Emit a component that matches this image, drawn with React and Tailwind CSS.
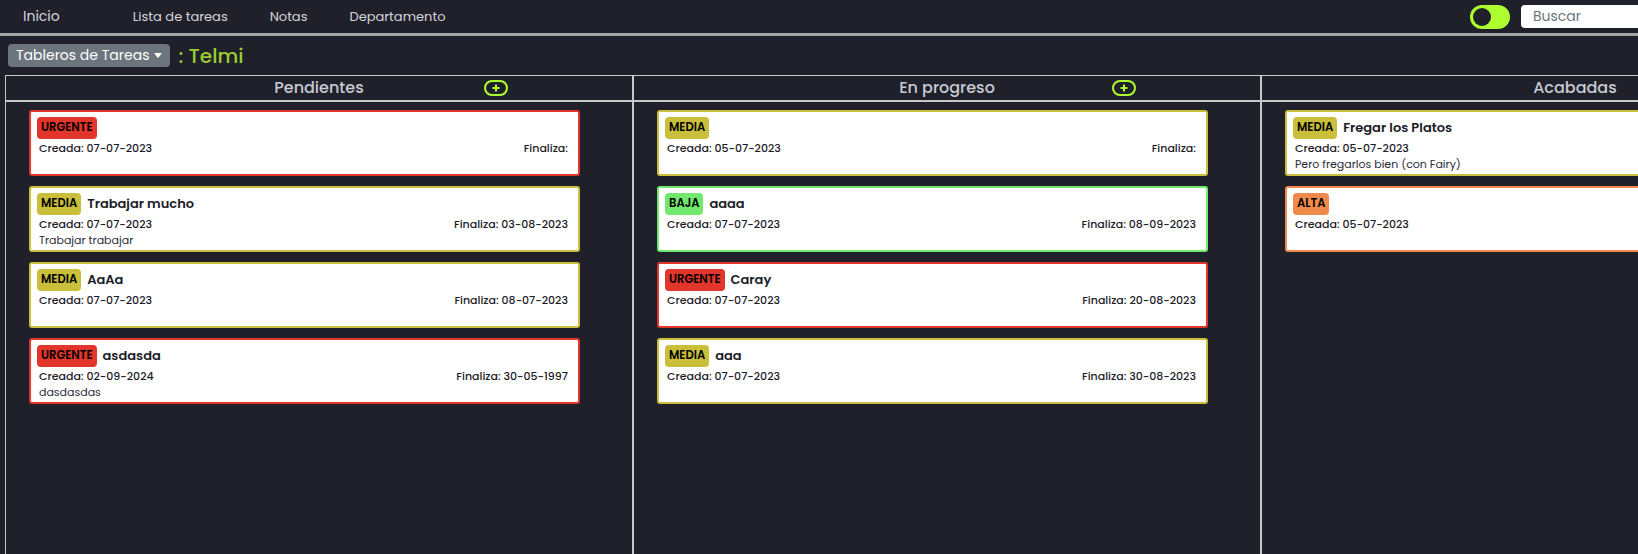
import { useState } from 'react'

const PRIORITY = {
  URGENTE: { badge: 'bg-[#e2352b]', border: 'border-[#e2352b]' },
  ALTA: { badge: 'bg-[#f08a4b]', border: 'border-[#f08a4b]' },
  MEDIA: { badge: 'bg-[#c9bf3a]', border: 'border-[#c9bf3a]' },
  BAJA: { badge: 'bg-[#72e86e]', border: 'border-[#72e86e]' },
}

const COLUMNS = [
  {
    name: 'Pendientes',
    tasks: [
      { p: 'URGENTE', title: '', created: '07-07-2023', ends: '', desc: '' },
      { p: 'MEDIA', title: 'Trabajar mucho', created: '07-07-2023', ends: '03-08-2023', desc: 'Trabajar trabajar' },
      { p: 'MEDIA', title: 'AaAa', created: '07-07-2023', ends: '08-07-2023', desc: '' },
      { p: 'URGENTE', title: 'asdasda', created: '02-09-2024', ends: '30-05-1997', desc: 'dasdasdas' },
    ],
  },
  {
    name: 'En progreso',
    tasks: [
      { p: 'MEDIA', title: '', created: '05-07-2023', ends: '', desc: '' },
      { p: 'BAJA', title: 'aaaa', created: '07-07-2023', ends: '08-09-2023', desc: '' },
      { p: 'URGENTE', title: 'Caray', created: '07-07-2023', ends: '20-08-2023', desc: '' },
      { p: 'MEDIA', title: 'aaa', created: '07-07-2023', ends: '30-08-2023', desc: '' },
    ],
  },
  {
    name: 'Acabadas',
    done: true,
    tasks: [
      { p: 'MEDIA', title: 'Fregar los Platos', created: '05-07-2023', desc: 'Pero fregarlos bien (con Fairy)' },
      { p: 'ALTA', title: '', created: '05-07-2023', desc: '' },
    ],
  },
]

function TaskCard({ task, done }) {
  const info = PRIORITY[task.p]
  return (
    <div className={`ml-[23px] mb-[10px] w-[551px] h-[66px] bg-white border-2 rounded-[3px] pt-[5px] pl-[6px] pr-[10px] ${info.border}`}>
      <div className="flex items-center h-[22px]">
        <span className={`h-[22px] px-[4px] rounded-[4px] flex items-center text-[11.5px] font-semibold text-black ${info.badge}`}>
          {task.p}
        </span>
        {task.title && (
          <span className="ml-[6px] text-[13px] font-semibold text-[#1c1c28]">{task.title}</span>
        )}
      </div>
      <div className="mt-[1px] flex justify-between pl-[2px] h-[16px] items-center text-[11px] font-medium text-[#1c1c28]">
        <span>Creada: {task.created}</span>
        {!done && <span>Finaliza: {task.ends}</span>}
      </div>
      {task.desc && (
        <p className="pl-[2px] h-[16px] flex items-center text-[11px] text-[#2a2a3a]">{task.desc}</p>
      )}
    </div>
  )
}

export default function App() {
  const [dark, setDark] = useState(true)

  return (
    <div className="h-screen w-screen overflow-hidden bg-[#20202a] font-['Poppins','Open_Sans',sans-serif]">
      {/* Navbar */}
      <nav className="h-[36px] border-b-[3px] border-[#a5a5a5] flex items-center">
        <span className="ml-[23px] text-[14px] text-[#d6d6dc]">Inicio</span>
        <div className="ml-[52px] flex">
          {['Lista de tareas', 'Notas', 'Departamento'].map(l => (
            <a key={l} className="px-[21px] text-[13px] text-[#d6d6dc]">{l}</a>
          ))}
        </div>
        <div className="ml-auto mr-[-63px] flex items-center shrink-0">
          <button
            onClick={() => setDark(d => !d)}
            className="w-[40px] h-[24px] rounded-full bg-[#adff2f] flex items-center px-[3px]"
          >
            <span className="w-[18px] h-[18px] rounded-full bg-[#20202a]" />
          </button>
          <input
            placeholder="Buscar"
            className="ml-[11px] w-[180px] h-[23px] rounded-[4px] bg-white px-3 text-[14px] placeholder:text-[#6c757d] outline-none"
          />
        </div>
      </nav>

      {/* Board selector */}
      <div className="flex items-center h-[39px] pl-[8px]">
        <button className="h-[23px] px-[8px] rounded-[4px] bg-[#6c757d] text-white text-[14px] flex items-center gap-[5px]">
          Tableros de Tareas
          <span className="border-x-[4px] border-x-transparent border-t-[5px] border-t-white" />
        </button>
        <span className="ml-[8px] text-[20px] font-medium text-[#9acd32]">: Telmi</span>
      </div>

      {/* Columns */}
      <div className="ml-[5px] flex border-t border-l border-[#c8c8c8] w-max h-[480px]">
        {COLUMNS.map(col => (
          <div key={col.name} className="w-[628px] shrink-0 border-r-2 border-[#c8c8c8]">
            <div className="relative h-[26px] border-b-2 border-[#c8c8c8] flex items-center justify-center">
              <span className="text-[16px] font-medium text-[#c6cbd4]">{col.name}</span>
              <button className="absolute left-[478px] top-[4px] w-[24px] h-[16px] rounded-full border-2 border-[#adff2f] flex items-center justify-center">
                <svg width="8" height="8" viewBox="0 0 8 8">
                  <path d="M4 0.5v7M0.5 4h7" stroke="#adff2f" strokeWidth="2" />
                </svg>
              </button>
            </div>
            <div className="pt-[8px]">
              {col.tasks.map((t, i) => <TaskCard key={i} task={t} done={col.done} />)}
            </div>
          </div>
        ))}
      </div>
    </div>
  )
}
